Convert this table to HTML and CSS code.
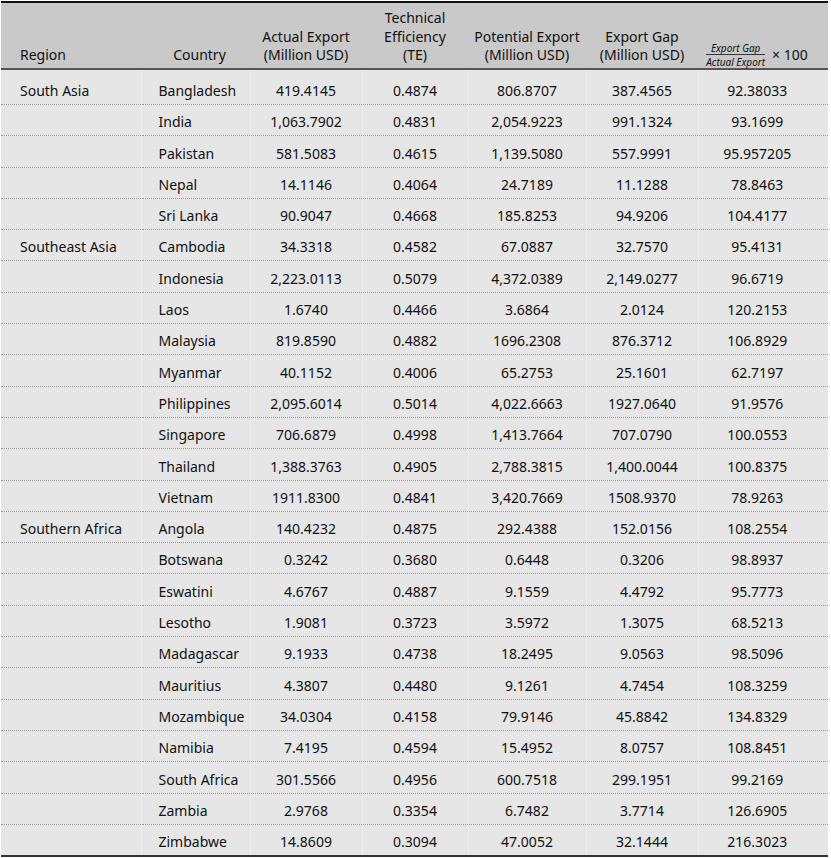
FILE: index.html
```html
<!DOCTYPE html>
<html lang="en">
<head>
    <meta charset="UTF-8">
    <meta name="viewport" content="width=device-width, initial-scale=1.0">
    <title>Export Potential by Region</title>
    <link rel="stylesheet" href="styles.css">
</head>
<body>
    <table class="export-table">
        <colgroup>
            <col class="col-region">
            <col class="col-country">
            <col class="col-actual">
            <col class="col-te">
            <col class="col-potential">
            <col class="col-gap">
            <col class="col-ratio">
        </colgroup>
        <thead>
            <tr>
                <th class="region">Region</th>
                <th class="country">Country</th>
                <th>Actual Export<br>(Million USD)</th>
                <th>Technical<br>Efficiency<br>(TE)</th>
                <th>Potential Export<br>(Million USD)</th>
                <th>Export Gap<br>(Million USD)</th>
                <th class="ratio">
                    <div class="ratio-head">
                        <span class="frac">
                            <span class="num">Export Gap</span>
                            <span class="den">Actual Export</span>
                        </span>
                        <span class="times">&times; 100</span>
                    </div>
                </th>
            </tr>
        </thead>
        <tbody>
            <tr class="first">
                <td class="region">South Asia</td><td class="country">Bangladesh</td>
                <td>419.4145</td><td>0.4874</td><td>806.8707</td><td>387.4565</td><td class="ratio">92.38033</td>
            </tr>
            <tr>
                <td class="region"></td><td class="country">India</td>
                <td>1,063.7902</td><td>0.4831</td><td>2,054.9223</td><td>991.1324</td><td class="ratio">93.1699</td>
            </tr>
            <tr>
                <td class="region"></td><td class="country">Pakistan</td>
                <td>581.5083</td><td>0.4615</td><td>1,139.5080</td><td>557.9991</td><td class="ratio">95.957205</td>
            </tr>
            <tr>
                <td class="region"></td><td class="country">Nepal</td>
                <td>14.1146</td><td>0.4064</td><td>24.7189</td><td>11.1288</td><td class="ratio">78.8463</td>
            </tr>
            <tr>
                <td class="region"></td><td class="country">Sri Lanka</td>
                <td>90.9047</td><td>0.4668</td><td>185.8253</td><td>94.9206</td><td class="ratio">104.4177</td>
            </tr>
            <tr>
                <td class="region">Southeast Asia</td><td class="country">Cambodia</td>
                <td>34.3318</td><td>0.4582</td><td>67.0887</td><td>32.7570</td><td class="ratio">95.4131</td>
            </tr>
            <tr>
                <td class="region"></td><td class="country">Indonesia</td>
                <td>2,223.0113</td><td>0.5079</td><td>4,372.0389</td><td>2,149.0277</td><td class="ratio">96.6719</td>
            </tr>
            <tr>
                <td class="region"></td><td class="country">Laos</td>
                <td>1.6740</td><td>0.4466</td><td>3.6864</td><td>2.0124</td><td class="ratio">120.2153</td>
            </tr>
            <tr>
                <td class="region"></td><td class="country">Malaysia</td>
                <td>819.8590</td><td>0.4882</td><td>1696.2308</td><td>876.3712</td><td class="ratio">106.8929</td>
            </tr>
            <tr>
                <td class="region"></td><td class="country">Myanmar</td>
                <td>40.1152</td><td>0.4006</td><td>65.2753</td><td>25.1601</td><td class="ratio">62.7197</td>
            </tr>
            <tr>
                <td class="region"></td><td class="country">Philippines</td>
                <td>2,095.6014</td><td>0.5014</td><td>4,022.6663</td><td>1927.0640</td><td class="ratio">91.9576</td>
            </tr>
            <tr>
                <td class="region"></td><td class="country">Singapore</td>
                <td>706.6879</td><td>0.4998</td><td>1,413.7664</td><td>707.0790</td><td class="ratio">100.0553</td>
            </tr>
            <tr>
                <td class="region"></td><td class="country">Thailand</td>
                <td>1,388.3763</td><td>0.4905</td><td>2,788.3815</td><td>1,400.0044</td><td class="ratio">100.8375</td>
            </tr>
            <tr>
                <td class="region"></td><td class="country">Vietnam</td>
                <td>1911.8300</td><td>0.4841</td><td>3,420.7669</td><td>1508.9370</td><td class="ratio">78.9263</td>
            </tr>
            <tr>
                <td class="region">Southern Africa</td><td class="country">Angola</td>
                <td>140.4232</td><td>0.4875</td><td>292.4388</td><td>152.0156</td><td class="ratio">108.2554</td>
            </tr>
            <tr>
                <td class="region"></td><td class="country">Botswana</td>
                <td>0.3242</td><td>0.3680</td><td>0.6448</td><td>0.3206</td><td class="ratio">98.8937</td>
            </tr>
            <tr>
                <td class="region"></td><td class="country">Eswatini</td>
                <td>4.6767</td><td>0.4887</td><td>9.1559</td><td>4.4792</td><td class="ratio">95.7773</td>
            </tr>
            <tr>
                <td class="region"></td><td class="country">Lesotho</td>
                <td>1.9081</td><td>0.3723</td><td>3.5972</td><td>1.3075</td><td class="ratio">68.5213</td>
            </tr>
            <tr>
                <td class="region"></td><td class="country">Madagascar</td>
                <td>9.1933</td><td>0.4738</td><td>18.2495</td><td>9.0563</td><td class="ratio">98.5096</td>
            </tr>
            <tr>
                <td class="region"></td><td class="country">Mauritius</td>
                <td>4.3807</td><td>0.4480</td><td>9.1261</td><td>4.7454</td><td class="ratio">108.3259</td>
            </tr>
            <tr>
                <td class="region"></td><td class="country">Mozambique</td>
                <td>34.0304</td><td>0.4158</td><td>79.9146</td><td>45.8842</td><td class="ratio">134.8329</td>
            </tr>
            <tr>
                <td class="region"></td><td class="country">Namibia</td>
                <td>7.4195</td><td>0.4594</td><td>15.4952</td><td>8.0757</td><td class="ratio">108.8451</td>
            </tr>
            <tr>
                <td class="region"></td><td class="country">South Africa</td>
                <td>301.5566</td><td>0.4956</td><td>600.7518</td><td>299.1951</td><td class="ratio">99.2169</td>
            </tr>
            <tr>
                <td class="region"></td><td class="country">Zambia</td>
                <td>2.9768</td><td>0.3354</td><td>6.7482</td><td>3.7714</td><td class="ratio">126.6905</td>
            </tr>
            <tr>
                <td class="region"></td><td class="country">Zimbabwe</td>
                <td>14.8609</td><td>0.3094</td><td>47.0052</td><td>32.1444</td><td class="ratio">216.3023</td>
            </tr>
        </tbody>
    </table>
</body>
</html>
```

FILE: styles.css
```css
body {
    margin: 0;
    background-color: #ffffff;
    font-family: "Noto Sans", Arial, sans-serif;
    color: #111111;
}

.export-table {
    width: 827px;
    margin: 1px 0 0 1px;
    table-layout: fixed;
    border-collapse: collapse;
    font-size: 14px;
    border-top: 2px solid #111111;
    border-bottom: 2px solid #333333;
}

.col-region { width: 140px; }
.col-country { width: 109px; }
.col-actual { width: 112px; }
.col-te { width: 106px; }
.col-potential { width: 118px; }
.col-gap { width: 112px; }
.col-ratio { width: 130px; }

th, td {
    text-align: center;
    white-space: nowrap;
    padding: 0;
}

thead th {
    background-color: #c9c9c9;
    font-weight: normal;
    line-height: 18.5px;
    vertical-align: bottom;
    padding: 6px 0 3.5px 0;
    border-bottom: 2px solid #555555;
}

tbody td {
    background-color: #e6e6e6;
    line-height: 19px;
    padding: 7.3px 0 4px 0;
    border-bottom: 1px dotted #9a9a9a;
    border-left: 1px solid #ededed;
}

tbody tr.first td {
    padding-top: 11px;
}

tbody tr:last-child td {
    border-bottom: none;
}

th.region, td.region {
    text-align: left;
    padding-left: 19px;
    border-left: none;
}

td.country {
    text-align: left;
    padding-left: 17px;
}

th.country {
    padding-left: 8px;
}

td.ratio {
    padding-right: 12px;
}

thead th.ratio {
    padding-right: 12px;
    padding-bottom: 0;
}

.ratio-head {
    display: flex;
    align-items: center;
    justify-content: center;
}

.frac {
    display: flex;
    flex-direction: column;
    align-items: center;
    font-style: italic;
    font-size: 10px;
    line-height: 12px;
}

.frac .den {
    border-top: 1px solid #333333;
    padding-top: 1px;
}

.times {
    margin-left: 7px;
}
```
